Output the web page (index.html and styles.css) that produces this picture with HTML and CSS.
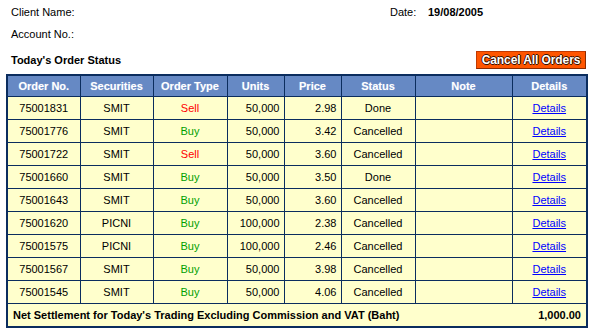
FILE: index.html
```html
<!DOCTYPE html>
<html>
<head>
<meta charset="utf-8">
<link rel="stylesheet" href="styles.css">
</head>
<body>
<div class="page">
  <div class="meta">
    <div class="meta-row">
      <span class="label">Client Name:</span>
      <span class="date-label">Date:</span>
      <span class="date-value">19/08/2005</span>
    </div>
    <div class="meta-row second">
      <span class="label">Account No.:</span>
    </div>
  </div>
  <div class="toolbar">
    <span class="title">Today's Order Status</span>
    <button class="cancel-btn">Cancel All Orders</button>
  </div>
  <table class="orders">
    <colgroup>
      <col class="c1"><col class="c2"><col class="c3"><col class="c4"><col class="c5"><col class="c6"><col class="c7"><col class="c8">
    </colgroup>
    <thead>
      <tr><th>Order No.</th><th>Securities</th><th>Order Type</th><th>Units</th><th>Price</th><th>Status</th><th>Note</th><th>Details</th></tr>
    </thead>
    <tbody>
      <tr><td>75001831</td><td>SMIT</td><td class="sell">Sell</td><td class="num">50,000</td><td class="num">2.98</td><td>Done</td><td></td><td><a href="#">Details</a></td></tr>
      <tr><td>75001776</td><td>SMIT</td><td class="buy">Buy</td><td class="num">50,000</td><td class="num">3.42</td><td>Cancelled</td><td></td><td><a href="#">Details</a></td></tr>
      <tr><td>75001722</td><td>SMIT</td><td class="sell">Sell</td><td class="num">50,000</td><td class="num">3.60</td><td>Cancelled</td><td></td><td><a href="#">Details</a></td></tr>
      <tr><td>75001660</td><td>SMIT</td><td class="buy">Buy</td><td class="num">50,000</td><td class="num">3.50</td><td>Done</td><td></td><td><a href="#">Details</a></td></tr>
      <tr><td>75001643</td><td>SMIT</td><td class="buy">Buy</td><td class="num">50,000</td><td class="num">3.60</td><td>Cancelled</td><td></td><td><a href="#">Details</a></td></tr>
      <tr><td>75001620</td><td>PICNI</td><td class="buy">Buy</td><td class="num">100,000</td><td class="num">2.38</td><td>Cancelled</td><td></td><td><a href="#">Details</a></td></tr>
      <tr><td>75001575</td><td>PICNI</td><td class="buy">Buy</td><td class="num">100,000</td><td class="num">2.46</td><td>Cancelled</td><td></td><td><a href="#">Details</a></td></tr>
      <tr><td>75001567</td><td>SMIT</td><td class="buy">Buy</td><td class="num">50,000</td><td class="num">3.98</td><td>Cancelled</td><td></td><td><a href="#">Details</a></td></tr>
      <tr><td>75001545</td><td>SMIT</td><td class="buy">Buy</td><td class="num">50,000</td><td class="num">4.06</td><td>Cancelled</td><td></td><td><a href="#">Details</a></td></tr>
    </tbody>
    <tfoot>
      <tr><td colspan="8"><div class="total"><span>Net Settlement for Today's Trading Excluding Commission and VAT (Baht)</span><span>1,000.00</span></div></td></tr>
    </tfoot>
  </table>
</div>
</body>
</html>
```
FILE: styles.css
```css
html, body {
  margin: 0;
  padding: 0;
  background: #ffffff;
}
body {
  font-family: "Liberation Sans", Arial, sans-serif;
  font-size: 11px;
  color: #000;
}
.page {
  padding: 0 6px;
  width: 580px;
}
.meta {
  padding: 5px 0 0 5px;
}
.meta-row {
  display: flex;
  height: 14px;
  line-height: 14px;
}
.meta-row.second {
  margin-top: 8px;
}
.label {
  width: 379px;
}
.date-label {
  width: 38px;
}
.date-value {
  font-weight: bold;
}
.toolbar {
  display: flex;
  align-items: center;
  justify-content: space-between;
  margin-top: 10px;
  height: 18px;
  padding-left: 5px;
}
.title {
  font-weight: bold;
  line-height: 14px;
}
.cancel-btn {
  height: 18px;
  width: 110px;
  padding: 0;
  margin: 0;
  border: 1px solid #c23a00;
  border-right-color: #8a2a00;
  border-bottom-color: #8a2a00;
  background: #ff5500;
  color: #ffffff;
  font-family: "Liberation Sans", Arial, sans-serif;
  font-weight: bold;
  font-size: 12px;
  letter-spacing: -0.1px;
  text-shadow: 1px 0 0 #3a1000, -1px 0 0 #3a1000, 0 1px 0 #3a1000, 0 -1px 0 #3a1000;
  line-height: 16px;
}
.orders {
  margin-top: 5px;
  width: 580px;
  table-layout: fixed;
  border-collapse: collapse;
  border: 2px solid #0b2d5e;
}
.c1 { width: 73px; }
.c2 { width: 73px; }
.c3 { width: 74px; }
.c4 { width: 57px; }
.c5 { width: 57px; }
.c6 { width: 74px; }
.c7 { width: 97px; }
.c8 { width: 75px; }
.orders th {
  background: #6689c4;
  color: #ffffff;
  font-weight: bold;
  height: 20px;
  padding: 0;
  border: 1px solid #0b2d5e;
  text-align: center;
  text-shadow: 0 0 1px #9fb5dd;
}
.orders td {
  background: #ffffcc;
  height: 22px;
  padding: 0 4px;
  border: 1px solid #0b2d5e;
  text-align: center;
  white-space: nowrap;
}
.orders td.num {
  text-align: right;
}
.orders td.sell {
  color: #ff0000;
}
.orders td.buy {
  color: #00a000;
}
.orders a {
  color: #0000ff;
  text-decoration: underline;
}
.orders tfoot td {
  height: 22px;
  padding: 0 5px 0 5px;
  font-weight: bold;
}
.total {
  display: flex;
  justify-content: space-between;
}
```
